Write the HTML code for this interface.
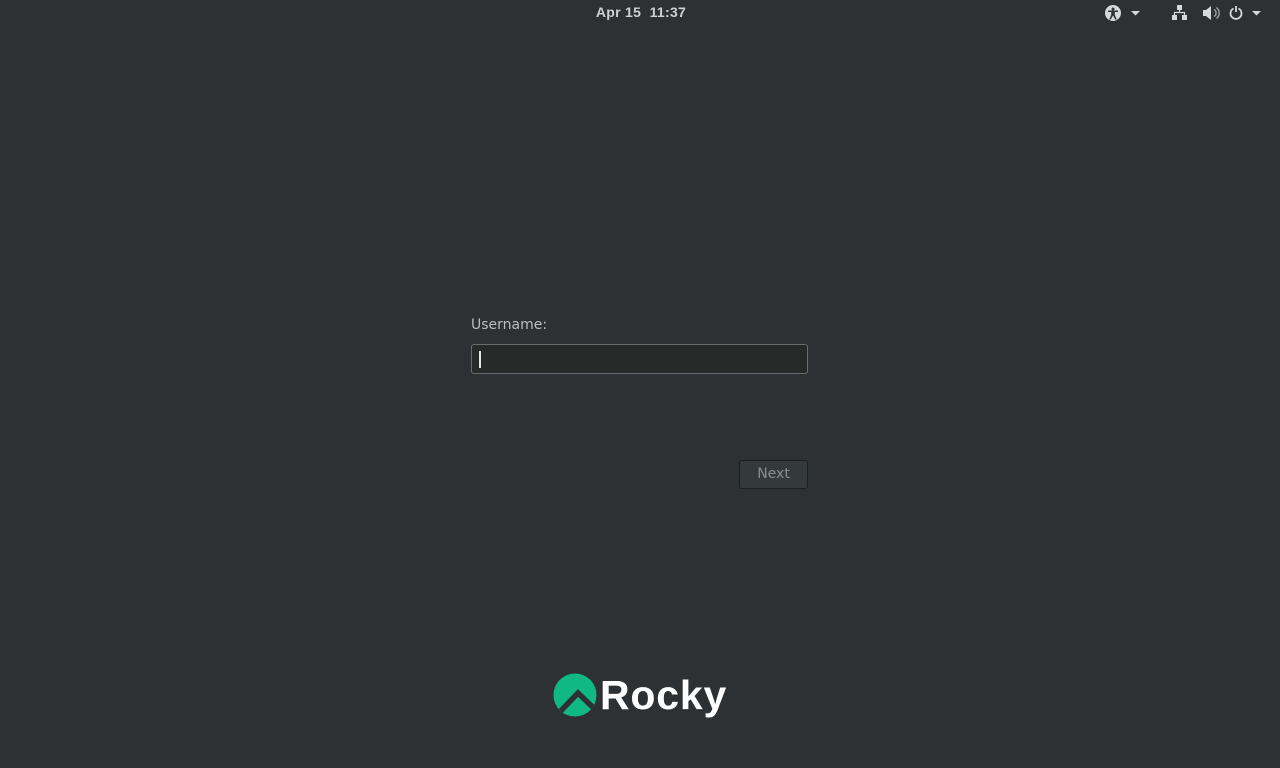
<!DOCTYPE html>
<html><head><style>
html,body{margin:0;padding:0;width:1280px;height:768px;overflow:hidden;background:#2e3133;font-family:"Liberation Sans","DejaVu Sans",sans-serif;}
.clock{position:absolute;top:4px;left:1px;width:1280px;text-align:center;color:#d0d0d0;font-size:14px;font-weight:bold;letter-spacing:0.3px}
.lbl{position:absolute;left:471px;top:317px;color:#bdbdbd;font-size:14px;font-family:"DejaVu Sans",sans-serif}
.inp{position:absolute;left:471px;top:344px;width:335px;height:28px;background:#282929;border:1px solid #6a6d6e;border-radius:3px}
.caret{position:absolute;left:7px;top:6px;width:2px;height:17px;background:#e6e6e6}
.btn{position:absolute;left:739px;top:460px;width:67px;height:27px;background:#34393b;border:1px solid #1c1e1f;border-radius:3px;color:#8a8d8e;font-size:14px;text-align:center;line-height:27px;font-family:"DejaVu Sans",sans-serif}
.rocky{position:absolute;left:600px;top:672px;color:#fff;font-size:41px;font-weight:bold;letter-spacing:0.8px}
svg{position:absolute}
</style></head><body>
<div class="clock">Apr 15&nbsp;&nbsp;11:37</div>
<svg style="left:1100px;top:0" width="180" height="26" viewBox="0 0 180 26">
 <g fill="#d8d8d8">
  <circle cx="13" cy="13" r="8"/>
  <path d="M31 11h9l-4.5 4.5z"/>
  <rect x="77" y="5" width="5" height="5"/><rect x="72" y="15" width="5" height="5"/><rect x="82" y="15" width="5" height="5"/>
  <path d="M103 10h3l5-4v14l-5-4h-3z"/>
  <path d="M152 11h9l-4.5 4.5z"/>
 </g>
 <g fill="#2e3133"><circle cx="13" cy="9" r="1.5"/><path d="M8 10.5h10v1.5h-3.2v3l2 4.5h-1.5l-2.3-4-2.3 4h-1.5l2-4.5v-3H8z"/></g>
 <path d="M79.5 10v2.5M74.5 15v-2.5h10V15" stroke="#d8d8d8" fill="none" stroke-width="1.2"/>
 <path d="M114 9.5a4 4 0 0 1 0 7M116.5 7.5a7 7 0 0 1 0 11" stroke="#999" fill="none" stroke-width="1.5"/>
 <path d="M133.5 8.5a5.5 5.5 0 1 0 5 0" stroke="#d8d8d8" fill="none" stroke-width="1.8"/>
 <path d="M136 6v6" stroke="#d8d8d8" stroke-width="1.8"/>
</svg>
<div class="lbl">Username:</div>
<div class="inp"><div class="caret"></div></div>
<div class="btn">Next</div>
<svg style="left:553px;top:673px" width="46" height="46" viewBox="0 0 46 46">
 <defs><clipPath id="c"><circle cx="22" cy="22" r="21.5"/></clipPath></defs>
 <circle cx="22" cy="22" r="21.5" fill="#10b981"/>
 <g clip-path="url(#c)">
  <path d="M0 46 L25 20 L50 44" stroke="#2e3133" stroke-width="5.5" fill="none" stroke-linejoin="miter"/>
  <path d="M0 46 L12 46 L25 32 L38 43 L46 46Z" fill="none"/>
 </g>
</svg>
<div class="rocky">Rocky</div>
</body></html>
